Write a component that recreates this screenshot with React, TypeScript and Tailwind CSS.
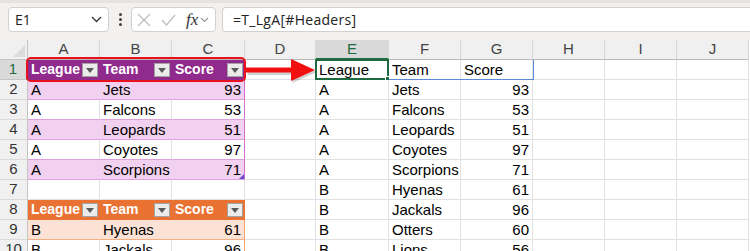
import React from "react";

const COLS = ["A", "B", "C", "D", "E", "F", "G", "H", "I", "J"];
const W = [
  "w-[72px]",
  "w-[72px]",
  "w-[73px]",
  "w-[71px]",
  "w-[73px]",
  "w-[72px]",
  "w-[72px]",
  "w-[72px]",
  "w-[72px]",
  "w-[72px]",
];

const teamsA = [
  ["A", "Jets", "93"],
  ["A", "Falcons", "53"],
  ["A", "Leopards", "51"],
  ["A", "Coyotes", "97"],
  ["A", "Scorpions", "71"],
];
const teamsB = [
  ["B", "Hyenas", "61"],
  ["B", "Jackals", "96"],
  ["B", "Otters", "60"],
  ["B", "Lions", "56"],
];
const spill = [...teamsA, ...teamsB];

const FilterBtn = () => (
  <span className="absolute right-[1px] top-[3px] w-[16px] h-[14px] bg-[#ebebeb] border border-[#a3a3a3] flex items-center justify-center">
    <svg width="8" height="5" viewBox="0 0 8 5">
      <path d="M0 0 L8 0 L4 5 Z" fill="#595959" />
    </svg>
  </span>
);

type CellProps = {
  col: number;
  text?: string;
  right?: boolean;
  cls: string;
  filter?: boolean;
  children?: React.ReactNode;
};

const Cell = ({ col, text, right, cls, filter, children }: CellProps) => (
  <div
    className={`${W[col]} h-[20px] shrink-0 relative border-r border-b px-[3px] overflow-visible whitespace-nowrap leading-[19px] ${
      right ? "text-right" : "text-left"
    } ${cls}`}
  >
    {text}
    {filter && <FilterBtn />}
    {children}
  </div>
);

const plain = "border-r-[#e1e1e1] border-b-[#e1e1e1] bg-white text-black text-[15px]";

function leftCell(row: number, col: number): CellProps {
  const right = col === 2;
  if (row === 1 || row === 8) {
    const bg = row === 1 ? "bg-[#902a8d] border-b-[#902a8d]" : "bg-[#e97132] border-b-[#e97132]";
    return {
      col,
      text: ["League", "Team", "Score"][col],
      cls: `${bg} border-r-transparent text-white font-bold text-[14px]`,
      filter: true,
    };
  }
  if (row >= 2 && row <= 6) {
    const d = teamsA[row - 2];
    const band = row % 2 === 0;
    const edge = col === 2 ? "border-r-[#d06fcc]" : band ? "border-r-transparent" : "border-r-[#e1e1e1]";
    return {
      col,
      text: d[col],
      right,
      cls: `${band ? "bg-[#f2d0ef]" : "bg-white"} ${edge} border-b-[#dca2d9] text-black text-[15px]`,
    };
  }
  if (row >= 9) {
    const d = teamsB[row - 9];
    const band = row % 2 === 1;
    const edge = col === 2 ? "border-r-[#f2a36e]" : band ? "border-r-transparent" : "border-r-[#e1e1e1]";
    return {
      col,
      text: d[col],
      right,
      cls: `${band ? "bg-[#fbe2d5]" : "bg-white"} ${edge} border-b-[#f4b084] text-black text-[15px]`,
    };
  }
  return { col, cls: plain };
}

function rightCell(row: number, col: number): CellProps {
  const i = col - 4;
  if (i >= 0 && i <= 2) {
    if (row === 1) return { col, text: ["League", "Team", "Score"][i], cls: plain };
    const d = spill[row - 2];
    return { col, text: d ? d[i] : "", right: i === 2, cls: plain };
  }
  return { col, cls: plain };
}

const Row = ({ row }: { row: number }) => (
  <div className="flex">
    <div
      className={`w-[28px] h-[20px] shrink-0 flex items-center justify-center text-[15px] border-b ${
        row === 1
          ? "bg-[#d9d9d9] text-[#1e6b41] border-r-2 border-r-[#1e6b41] border-b-[#c4c4c4]"
          : "bg-[#f0f0f0] text-[#333] border-r border-r-[#c4c4c4] border-b-[#dadada]"
      }`}
    >
      {row}
    </div>
    {COLS.map((_, c) => {
      const p = c <= 2 ? leftCell(row, c) : rightCell(row, c);
      return (
        <Cell key={c} {...p}>
          {row === 6 && c === 2 && (
            <span className="absolute right-[0px] bottom-[0px] w-0 h-0 border-l-[5px] border-l-transparent border-b-[5px] border-b-[#6b4bc9]" />
          )}
          {row === 1 && c === 4 && (
            <span className="absolute -left-[1px] -top-[1px] w-[74px] h-[21px] border-2 border-[#1e6b41]">
              <span className="absolute -right-[4px] -bottom-[4px] w-[6px] h-[6px] bg-[#1e6b41] border border-white" />
            </span>
          )}
        </Cell>
      );
    })}
  </div>
);

export default function App() {
  return (
    <div
      className="w-[750px] h-[251px] overflow-hidden bg-white text-[14px]"
      style={{ fontFamily: '"Liberation Sans", Arial, sans-serif' }}
    >
      {/* Formula bar */}
      <div className="h-[40px] bg-[#f3f0f0] border-t-[3px] border-t-[#e8e2e2] flex items-start pt-[4px] pl-[8px]">
        <div className="w-[101px] h-[25px] bg-white border border-[#d3d0d0] rounded-[4px] flex items-center justify-between pl-[6px] pr-[6px] text-[14px] text-[#222] font-['Open_Sans',sans-serif]">
          <span>E1</span>
          <svg width="11" height="7" viewBox="0 0 11 7">
            <path d="M1 1 L5.5 5.5 L10 1" fill="none" stroke="#333" strokeWidth="1.3" />
          </svg>
        </div>
        <div className="w-[22px] h-[25px] flex flex-col items-center justify-center gap-[2px]">
          <span className="w-[3px] h-[3px] rounded-full bg-[#444]" />
          <span className="w-[3px] h-[3px] rounded-full bg-[#444]" />
          <span className="w-[3px] h-[3px] rounded-full bg-[#444]" />
        </div>
        <div className="w-[85px] h-[25px] bg-white border border-[#d3d0d0] rounded-[4px] flex items-center pl-[5px] gap-[10px]">
          <svg width="14" height="14" viewBox="0 0 14 14">
            <path d="M1 1 L13 13 M13 1 L1 13" stroke="#bdbdbd" strokeWidth="1.2" fill="none" />
          </svg>
          <svg width="15" height="12" viewBox="0 0 15 12">
            <path d="M1 6 L5.5 11 L14 1" stroke="#bdbdbd" strokeWidth="1.2" fill="none" />
          </svg>
          <span className="flex items-center gap-[2px]">
            <span className="italic text-[17px] text-[#333] leading-none font-['Liberation_Serif',serif]">fx</span>
            <svg width="9" height="6" viewBox="0 0 9 6">
              <path d="M1 1 L4.5 4.5 L8 1" fill="none" stroke="#999" strokeWidth="1.1" />
            </svg>
          </span>
        </div>
        <div className="flex-1 ml-[6px] h-[25px] bg-white border border-r-0 border-[#d3d0d0] rounded-l-[4px] flex items-center pl-[10px] text-[14px] text-[#222] tracking-[0.3px] font-['Open_Sans',sans-serif]">
          =T_LgA[#Headers]
        </div>
      </div>

      {/* Grid */}
      <div className="relative">
        <div className="flex h-[20px]">
          <div className="w-[28px] h-[20px] shrink-0 bg-[#f0f0f0] border-r border-b border-[#c4c4c4] relative overflow-hidden">
            <span className="absolute right-[2px] bottom-[2px] w-0 h-0 border-l-[12px] border-l-transparent border-b-[12px] border-b-[#dcdcdc]" />
          </div>
          {COLS.map((c, i) => (
            <div
              key={c}
              className={`${W[i]} h-[20px] shrink-0 flex items-center justify-center text-[15px] border-r border-r-[#d6d6d6] ${
                i === 4
                  ? "bg-[#d9d9d9] text-[#1e6b41] border-b-2 border-b-[#1e6b41]"
                  : "bg-[#f0f0f0] text-[#444] border-b border-b-[#b9b9b9]"
              }`}
            >
              {c}
            </div>
          ))}
        </div>
        {[1, 2, 3, 4, 5, 6, 7, 8, 9, 10].map((r) => (
          <Row key={r} row={r} />
        ))}

        {/* spill range outline */}
        <div className="absolute left-[389px] top-[20px] w-[145px] h-[20px] border-r border-b border-[#5b8bd6] pointer-events-none" />

        {/* red highlight box */}
        <div className="absolute left-[26px] top-[17px] w-[220px] h-[25px] border-2 border-[#e8121c] rounded-[5px] pointer-events-none" />

        {/* red arrow */}
        <svg
          className="absolute left-[240px] top-[14px] pointer-events-none"
          width="80"
          height="32"
          viewBox="0 0 80 32"
        >
          <path d="M6 14 L51 14 L51 5 L75 16 L51 27 L51 19 L6 19 Z" fill="#000" opacity="0.18" transform="translate(1.5 2)" />
          <path d="M6 13.5 L51 13.5 L51 5 L75 16 L51 27 L51 18.5 L6 18.5 Z" fill="#f01010" />
        </svg>
      </div>
    </div>
  );
}
